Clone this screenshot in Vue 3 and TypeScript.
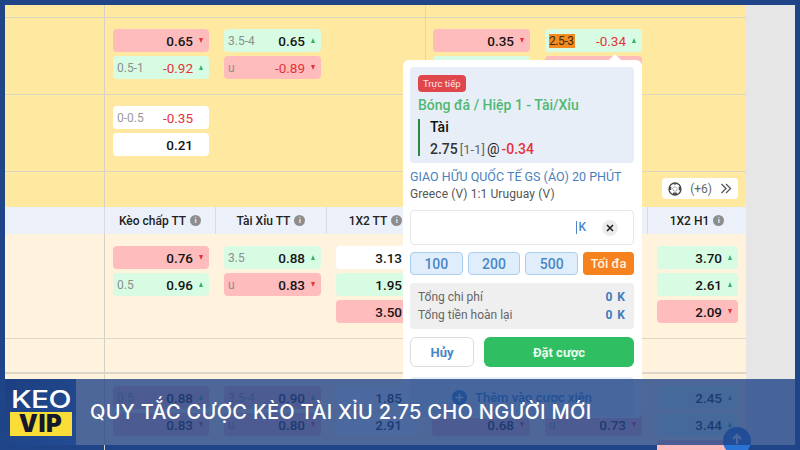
<script setup lang="ts">
type Tone = 'red' | 'green' | 'white'
type Dir = 'up' | 'down' | ''
interface Chip { tone: Tone; label?: string; value?: string; neg?: boolean; dir?: Dir; hot?: boolean }
interface Row { name: string; cols: Chip[][] }

const rows: Row[] = [
  { name: 'a', cols: [[], [], [], [], [], []] },
  {
    name: 'b',
    cols: [
      [{ tone: 'red', value: '0.65', dir: 'down' }, { tone: 'green', label: '0.5-1', value: '-0.92', neg: true, dir: 'up' }],
      [{ tone: 'green', label: '3.5-4', value: '0.65', dir: 'up' }, { tone: 'red', label: 'u', value: '-0.89', neg: true, dir: 'down' }],
      [],
      [{ tone: 'red', value: '0.35', dir: 'down' }, { tone: 'green' }],
      [{ tone: 'green', label: '2.5-3', hot: true, value: '-0.34', neg: true, dir: 'up' }, { tone: 'red' }],
      [],
    ],
  },
  {
    name: 'c',
    cols: [
      [{ tone: 'white', label: '0-0.5', value: '-0.35', neg: true }, { tone: 'white', value: '0.21' }],
      [], [], [], [], [],
    ],
  },
]

const lowerRows: Row[] = [
  {
    name: 'e',
    cols: [
      [{ tone: 'red', value: '0.76', dir: 'down' }, { tone: 'green', label: '0.5', value: '0.96', dir: 'up' }],
      [{ tone: 'green', label: '3.5', value: '0.88', dir: 'up' }, { tone: 'red', label: 'u', value: '0.83', dir: 'down' }],
      [{ tone: 'white', value: '3.13' }, { tone: 'green', value: '1.95' }, { tone: 'red', value: '3.50' }],
      [], [],
      [{ tone: 'green', value: '3.70', dir: 'up' }, { tone: 'green', value: '2.61', dir: 'up' }, { tone: 'red', value: '2.09', dir: 'down' }],
    ],
  },
  { name: 'f', cols: [[], [], [], [], [], []] },
  {
    name: 'g',
    cols: [
      [{ tone: 'red', label: '0.5', value: '0.88', dir: 'up' }, { tone: 'red', value: '0.83', dir: 'down' }],
      [{ tone: 'red', label: '3.5-4', value: '0.90', dir: 'up' }, { tone: 'red', label: 'u', value: '0.80', dir: 'down' }],
      [{ tone: 'white', value: '1.85' }, { tone: 'white', value: '2.91' }],
      [{ tone: 'green' }, { tone: 'red', value: '0.68', dir: 'down' }],
      [{ tone: 'green' }, { tone: 'red', label: 'u', value: '0.73', dir: 'down' }],
      [{ tone: 'green', value: '2.45', dir: 'up' }, { tone: 'green', value: '3.44', dir: 'up' }, { tone: 'red' }],
    ],
  },
]

const heads = ['Kèo chấp TT', 'Tài Xỉu TT', '1X2 TT', 'Kèo chấp H1', 'Tài Xỉu H1', '1X2 H1']
const stakes = ['100', '200', '500']
</script>

<template>
  <div class="frame">
    <div class="sheet">
      <div class="board">
        <section class="zone zone--top">
          <div v-for="r in rows" :key="r.name" class="row" :class="'row--' + r.name">
            <div class="side"></div>
            <div v-for="(col, i) in r.cols" :key="i" class="cell">
              <div v-for="(c, j) in col" :key="j" class="chip" :class="'chip--' + c.tone">
                <span v-if="c.label" class="chip-label" :class="{ 'chip-label--hot': c.hot }">{{ c.label }}</span>
                <span class="chip-value" :class="{ 'chip-value--neg': c.neg }">{{ c.value }}</span>
                <span class="arrow" :class="c.dir ? 'arrow--' + c.dir : ''"></span>
              </div>
            </div>
          </div>
          <div class="row row--d">
            <div class="side"></div>
            <div class="more-wrap">
              <div class="more">
                <svg width="14" height="14" viewBox="0 0 14 14" class="ball">
                  <circle cx="7" cy="7" r="6" fill="#fff" stroke="#4a4a4a" stroke-width="1.3" />
                  <path d="M7 4.6 9.3 6.3 8.4 9H5.6L4.7 6.3Z" fill="#fff" stroke="#666" stroke-width=".5" />
                  <path d="M5.2 1 8.8 1 7 3.2ZM1 5 3.3 4.6 3.2 8 1 8ZM13 5 10.7 4.6 10.8 8.4 13 8ZM4.4 12.6 5.4 10.4H8.6L9.6 12.6 7 13.2Z" fill="#4a4a4a" />
                </svg>
                <span class="more-count">(+6)</span>
                <svg width="12" height="11" viewBox="0 0 12 11" fill="none" stroke="#555" stroke-width="1.3">
                  <path d="M1.5 1 6 5.5 1.5 10M6 1 10.5 5.5 6 10" />
                </svg>
              </div>
            </div>
          </div>
        </section>

        <div class="row row--head">
          <div class="side"></div>
          <div v-for="h in heads" :key="h" class="head">
            <span>{{ h }}</span><i class="info">i</i>
          </div>
        </div>

        <section class="zone zone--low">
          <div v-for="r in lowerRows" :key="r.name" class="row" :class="'row--' + r.name">
            <div class="side"></div>
            <div v-for="(col, i) in r.cols" :key="i" class="cell">
              <div v-for="(c, j) in col" :key="j" class="chip" :class="'chip--' + c.tone">
                <span v-if="c.label" class="chip-label">{{ c.label }}</span>
                <span class="chip-value" :class="{ 'chip-value--neg': c.neg }">{{ c.value }}</span>
                <span class="arrow" :class="c.dir ? 'arrow--' + c.dir : ''"></span>
              </div>
            </div>
          </div>
        </section>
      </div>
      <div class="rail"></div>
    </div>

    <aside class="popup">
      <span class="popup-tip"></span>
      <div class="ticket">
        <span class="live">Trực tiếp</span>
        <div class="market">Bóng đá / Hiệp 1 - Tài/Xỉu</div>
        <div class="pick">
          <b class="pick-name">Tài</b>
          <div class="pick-line">
            <b>2.75</b><span class="pick-score">[1-1]</span><span class="pick-at">@</span><b class="pick-odds">-0.34</b>
          </div>
        </div>
      </div>
      <div class="league">GIAO HỮU QUỐC TẾ GS (ẢO) 20 PHÚT</div>
      <div class="teams">Greece (V) 1:1 Uruguay (V)</div>
      <div class="stake">
        <span class="stake-unit">K</span>
        <span class="stake-clear">
          <svg width="8" height="8" viewBox="0 0 8 8" stroke="#222" stroke-width="1.6"><path d="M1 1 7 7M7 1 1 7" /></svg>
        </span>
      </div>
      <div class="quick">
        <button v-for="s in stakes" :key="s" class="quick-btn">{{ s }}</button>
        <button class="quick-max">Tối đa</button>
      </div>
      <div class="summary">
        <div class="summary-row"><span>Tổng chi phí</span><b>0 K</b></div>
        <div class="summary-row"><span>Tổng tiền hoàn lại</span><b>0 K</b></div>
      </div>
      <div class="actions">
        <button class="cancel">Hủy</button>
        <button class="place">Đặt cược</button>
      </div>
      <div class="parlay">
        <svg width="15" height="15" viewBox="0 0 15 15"><circle cx="7.5" cy="7.5" r="7.5" fill="#2c80c8" /><path d="M7.5 3.5v8M3.5 7.5h8" stroke="#fff" stroke-width="1.6" /></svg>
        <span>Thêm vào cược xiên</span>
      </div>
    </aside>

    <span class="to-top">
      <svg width="12" height="12" viewBox="0 0 12 12" fill="none" stroke="#fff" stroke-width="2"><path d="M6 11V2M2 6l4-4 4 4" /></svg>
    </span>

    <footer class="banner">
      <div class="logo">
        <span class="logo-keo">KEO</span>
        <span class="logo-vip">VIP</span>
      </div>
      <h1 class="title">QUY TẮC CƯỢC KÈO TÀI XỈU 2.75 CHO NGƯỜI MỚI</h1>
    </footer>
  </div>
</template>

<style scoped>
.frame {
  position: relative;
  box-sizing: border-box;
  width: 800px;
  height: 450px;
  padding: 5px;
  overflow: hidden;
  background: #1f4487;
  font-family: Roboto, "Noto Sans", sans-serif;
  color: #111;
}
.sheet { display: flex; height: 440px; }
.board { width: 741px; display: flex; flex-direction: column; }
.rail { flex: 1; background: #e6e6e6; }

.zone--top { background: #ffe9a1; }
.zone--low { background: #fff3dd; flex: 1; }

.row {
  display: grid;
  grid-template-columns: 100px 111px 111px 98px 112px 111px 98px;
  border-bottom: 1px solid #d9d6bf;
  box-sizing: border-box;
}
.zone--low .row { border-bottom-color: #dcd6c8; }
.row--a { height: 13px; }
.row--b { height: 77px; }
.row--c { height: 77px; }
.row--d { height: 35px; border-bottom: 0; }
.row--e { height: 105px; }
.row--f { height: 35px; border-bottom-width: 2px; }
.row--g { flex: 1; height: 71px; border-bottom: 0; }

.side { border-right: 1px solid #d4d2c4; }
.row--a .cell:nth-child(5),
.row--b .cell:nth-child(5),
.row--c .cell:nth-child(5) { border-left: 1px solid #d9d6bf; }

.cell {
  box-sizing: border-box;
  padding: 11px 7px 0 8px;
  display: flex;
  flex-direction: column;
  gap: 4px;
}
.row--e .cell, .row--g .cell { padding-top: 12px; }
.cell:nth-child(3), .cell:nth-child(6) { padding-right: 6px; }
.cell:nth-child(4) { padding-left: 9px; }
.cell:nth-child(5) { padding-left: 7px; }
.cell:nth-child(7) { padding-left: 9px; padding-right: 8px; }

.chip {
  display: flex;
  align-items: center;
  height: 23px;
  flex: none;
  padding-left: 4px;
  border-radius: 4px;
  background: #fff;
  font-size: 13px;
}
.chip--red { background: #ffbcbc; }
.chip--green { background: #d8fce3; }
.chip-label { color: #8a8f8c; font-size: 12px; }
.chip--white .chip-label { color: #9a9a9a; }
.chip-label--hot { background: #f58a1f; color: #3a2a10; font-size: 12px; margin-left: 0; letter-spacing: -.4px; padding-right: 1px; }
.chip-value { margin-left: auto; font-weight: 500; font-size: 13.5px; color: #141414; }
.chip-value--neg { color: #e5323c; font-weight: 400; }
.arrow { flex: none; width: 16px; display: flex; justify-content: center; }
.arrow--up::before, .arrow--down::before {
  content: "";
  border-left: 2.5px solid transparent;
  border-right: 2.5px solid transparent;
}
.arrow--up::before { border-bottom: 5px solid #35b26c; }
.arrow--down::before { border-top: 5px solid #e5323c; }

.more-wrap {
  grid-column: 2 / -1;
  display: flex;
  justify-content: flex-end;
  padding: 6px 8px 0 0;
}
.more {
  display: flex;
  align-items: center;
  gap: 8px;
  height: 21px;
  padding: 0 6px;
  border-radius: 4px;
  background: #fff;
  font-size: 12px;
  color: #666;
}

.row--head { height: 27px; background: #ecf1f9; border-bottom: 0; }
.row--head .side { border-right: 1px solid #d6dbe4; }
.head {
  display: flex;
  align-items: center;
  justify-content: center;
  gap: 4px;
  border-right: 1px solid #d6dbe4;
  font-size: 12px;
  font-weight: 500;
  color: #222;
}
.head:last-child { border-right: 0; }
.info {
  width: 11px;
  height: 11px;
  border-radius: 50%;
  background: #8d8d8d;
  color: #eee;
  font-size: 8px;
  font-style: normal;
  font-weight: 700;
  line-height: 11px;
  text-align: center;
}

.popup {
  position: absolute;
  left: 403px;
  top: 60px;
  width: 239px;
  height: 358px;
  box-sizing: border-box;
  padding: 7px 8px 0 7px;
  border-radius: 6px;
  background: #fff;
}
.popup-tip {
  position: absolute;
  top: -6px;
  left: 206px;
  border-left: 6px solid transparent;
  border-right: 6px solid transparent;
  border-bottom: 6px solid #fff;
}
.ticket {
  height: 96px;
  box-sizing: border-box;
  padding: 8px 8px 0;
  border-radius: 4px;
  background: #e8eef7;
}
.live {
  display: inline-block;
  height: 17px;
  padding: 0 5px;
  border-radius: 4px;
  background: #e0474c;
  color: #fde8e8;
  font-size: 9.5px;
  line-height: 17px;
  vertical-align: top;
}
.market { margin-top: 2px; color: #4fb974; font-size: 14px; font-weight: 500; line-height: 18px; }
.pick {
  margin-top: 6px;
  height: 37px;
  padding-left: 10px;
  border-left: 2px solid #2b8a3e;
  font-size: 14px;
}
.pick-name { display: block; font-weight: 500; color: #111; line-height: 17px; margin-top: -1px; }
.pick-line { display: flex; align-items: baseline; line-height: 20px; margin-top: 3px; color: #333; }
.pick-line b { font-weight: 500; }
.pick-score { margin-left: 2px; color: #666; font-size: 13px; }
.pick-at { margin: 0 2px; color: #222; }
.pick-odds { color: #e5323c; }
.league { margin-top: 6px; color: #4a7fbd; font-size: 12.5px; line-height: 16px; }
.teams { margin-top: 1px; color: #555; font-size: 12px; line-height: 16px; letter-spacing: .1px; }
.stake {
  position: relative;
  display: flex;
  align-items: center;
  justify-content: flex-end;
  height: 35px;
  margin-top: 8px;
  box-sizing: border-box;
  border: 1px solid #e6e6e6;
  border-radius: 4px;
  padding-right: 15px;
}
.stake-unit { border-left: 1px solid #4a86c8; padding-left: 1px; margin-right: 16px; color: #4a86c8; font-size: 12px; font-weight: 500; line-height: 13px; }
.stake-clear {
  width: 16px;
  height: 16px;
  display: flex;
  align-items: center;
  justify-content: center;
  border-radius: 50%;
  background: #ececec;
}
.quick { display: flex; gap: 5px; margin-top: 7px; }
.quick-btn {
  flex: 1;
  height: 23px;
  padding: 0;
  border: 1px solid #a9cff0;
  border-radius: 4px;
  background: #e0eefb;
  color: #4a86c8;
  font: 500 14px Roboto, sans-serif;
}
.quick-max {
  width: 51px;
  height: 23px;
  padding: 0;
  border: 0;
  border-radius: 4px;
  background: #f5811f;
  color: #fff3e0;
  font: 500 13px Roboto, sans-serif;
}
.summary {
  margin-top: 8px;
  height: 46px;
  box-sizing: border-box;
  padding: 5px 8px;
  border-radius: 4px;
  background: #efefef;
  color: #666;
  font-size: 12px;
  line-height: 18px;
}
.summary-row { display: flex; justify-content: space-between; }
.summary-row b { color: #3d7dbd; font-weight: 700; letter-spacing: 1px; }
.actions { display: flex; gap: 10px; margin-top: 8px; }
.cancel {
  width: 64px;
  height: 30px;
  padding: 0;
  border: 1px solid #dcdcdc;
  border-radius: 6px;
  background: #fff;
  color: #4a86c8;
  font: 700 13px Roboto, sans-serif;
}
.place {
  flex: 1;
  height: 30px;
  padding: 0;
  border: 0;
  border-radius: 6px;
  background: #2fbf62;
  color: #e9fbef;
  font: 700 13px Roboto, sans-serif;
}
.parlay {
  display: flex;
  align-items: center;
  justify-content: center;
  gap: 8px;
  height: 40px;
  margin-top: 10px;
  border-radius: 4px;
  background: #e8eef7;
  color: #2c80c8;
  font-size: 13px;
  font-weight: 500;
}

.to-top {
  position: absolute;
  left: 723px;
  top: 427px;
  width: 28px;
  height: 28px;
  display: flex;
  justify-content: center;
  padding-top: 6px;
  box-sizing: border-box;
  border-radius: 50%;
  background: #2a73d6;
}

.banner {
  position: absolute;
  left: 5px;
  right: 5px;
  top: 379px;
  height: 66px;
  display: flex;
  align-items: center;
  background: rgba(31, 68, 135, .8);
}
.logo {
  width: 71px;
  height: 66px;
  flex: none;
  display: flex;
  flex-direction: column;
  align-items: center;
  box-sizing: border-box;
  padding-top: 9px;
  background: linear-gradient(135deg, #1c3f80, #234c94);
}
.logo-keo {
  color: #fff;
  font: 500 24px/24px Inter, sans-serif;
  letter-spacing: -.5px;
  transform: scaleX(1.25);
}
.logo-vip {
  width: 62px;
  height: 24px;
  margin-top: 0;
  background: #fbdd38;
  color: #14182c;
  font: 900 24px/24px Inter, sans-serif;
  text-align: center;
  letter-spacing: .5px;
}
.title {
  margin: 0 0 0 14px;
  color: #fff;
  font: 500 20px/1 Inter, sans-serif;
  letter-spacing: .3px;
  white-space: nowrap;
}
</style>

<style>
html, body { margin: 0; padding: 0; }
</style>
